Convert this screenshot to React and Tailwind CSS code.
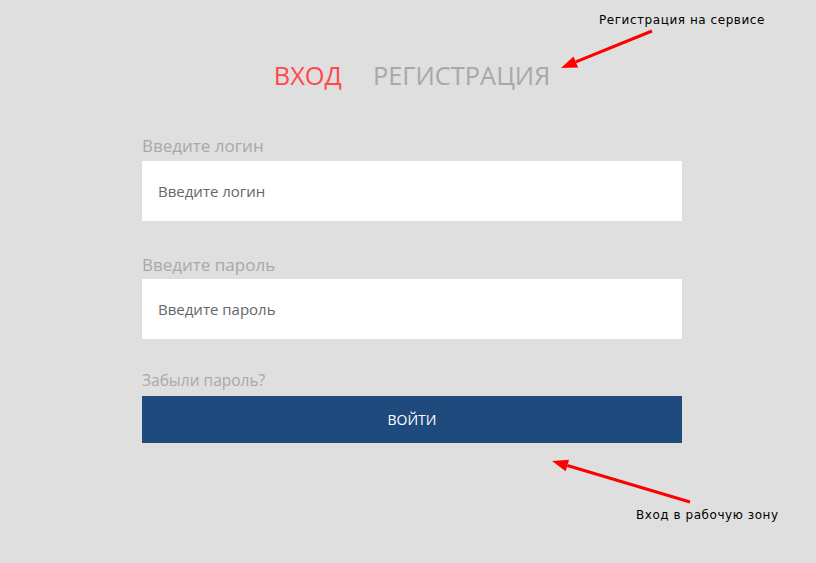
import React from 'react';

const ui = { fontFamily: '"Open Sans", "Noto Sans", sans-serif' };
const note = { fontFamily: '"DejaVu Sans", Verdana, sans-serif' };

function Arrow({ x1, y1, x2, y2 }) {
  // line from (x1,y1) to tip (x2,y2) with a filled head
  const ang = Math.atan2(y2 - y1, x2 - x1);
  const len = 16, half = 6;
  const bx = x2 - len * Math.cos(ang), by = y2 - len * Math.sin(ang);
  const px = -Math.sin(ang) * half, py = Math.cos(ang) * half;
  const pts = `${x2},${y2} ${bx + px},${by + py} ${bx - px},${by - py}`;
  return (
    <g>
      <line x1={x1} y1={y1} x2={bx} y2={by} stroke="#ff0000" strokeWidth="3" />
      <polygon points={pts} fill="#ff0000" />
    </g>
  );
}

export default function App() {
  return (
    <div className="relative h-[563px] w-full overflow-hidden bg-[#dfdfdf]" style={ui}>
      <div className="ml-[142px] w-[540px] pt-[62px]">
        {/* Tabs */}
        <div className="flex justify-center gap-[31px] text-[25.4px] leading-[26px]">
          <span className="text-[#ff4a4a]">ВХОД</span>
          <span className="text-[#a8a8a8]">РЕГИСТРАЦИЯ</span>
        </div>

        <div className="mt-[46px]">
          <label className="block text-[17px] leading-[23px] text-[#a9a9a9]">Введите логин</label>
          <div className="mt-[4px] flex h-[60px] items-center bg-white px-4 text-[15px] text-[#666666]">
            Введите логин
          </div>
        </div>

        <div className="mt-[32px]">
          <label className="block text-[17px] leading-[23px] text-[#a9a9a9]">Введите пароль</label>
          <div className="mt-[3px] flex h-[60px] items-center bg-white px-4 text-[15px] text-[#666666]">
            Введите пароль
          </div>
        </div>

        <div className="mt-[30px] text-[15.5px] leading-[23px] text-[#a9a9a9]">Забыли пароль?</div>
        <button className="mt-[4px] flex h-[47px] w-full items-center justify-center bg-[#1f4a7d] text-[14px] text-white">
          ВОЙТИ
        </button>
      </div>

      {/* Annotations */}
      <div className="absolute left-[599px] top-[12px] text-[12px] leading-[16px] tracking-[0.55px] text-black" style={note}>
        Регистрация на сервисе
      </div>
      <div className="absolute left-[636px] top-[507px] text-[12px] leading-[16px] tracking-[0.55px] text-black" style={note}>
        Вход в рабочую зону
      </div>
      <svg className="pointer-events-none absolute inset-0" width="816" height="563">
        <Arrow x1={652} y1={31} x2={561} y2={68} />
        <Arrow x1={690} y1={502} x2={552} y2={461} />
      </svg>
    </div>
  );
}
